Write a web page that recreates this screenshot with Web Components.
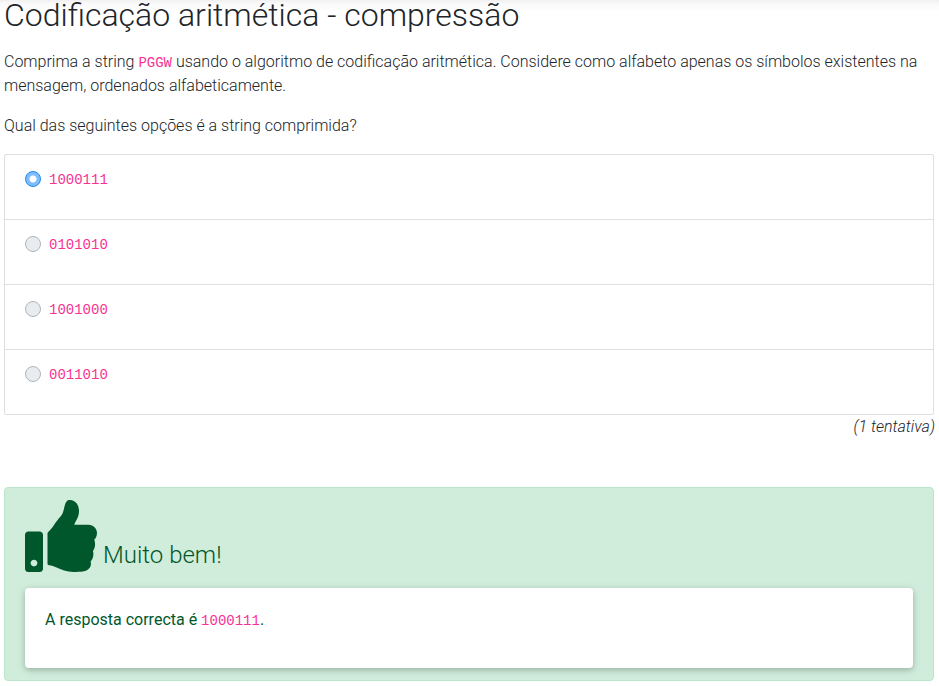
<!DOCTYPE html>
<html lang="pt">
<head>
<meta charset="utf-8">
<title>Codificação aritmética - compressão</title>
<style>
body{margin:0;background:#fff;color:#212529;font:300 16px/24px Roboto,"Liberation Sans",sans-serif}
</style>
</head>
<body>
<quiz-page>
  <quiz-question heading="Codificação aritmética - compressão">
    <p>Comprima a string <code-text>PGGW</code-text> usando o algoritmo de codificação aritmética. Considere como alfabeto apenas os símbolos existentes na mensagem, ordenados alfabeticamente.</p>
    <p>Qual das seguintes opções é a string comprimida?</p>
  </quiz-question>
  <quiz-options options="1000111 0101010 1001000 0011010" selected="0">(1 tentativa)</quiz-options>
  <quiz-feedback heading="Muito bem!">A resposta correcta é <code-text>1000111</code-text>.</quiz-feedback>
</quiz-page>
<script>
function define(name, render) {
  customElements.define(name, class extends HTMLElement {
    constructor() {
      super();
      this.attachShadow({mode: 'open'}).innerHTML = render(this);
    }
  });
}

define('code-text', () => `
<style>
:host{display:inline}
code{font:400 14px "Liberation Mono",monospace;color:#f83292}
</style><code><slot></slot></code>`);

define('quiz-page', () => `
<style>
:host{display:block}
main{padding:0 5px 5px 4px;background:linear-gradient(#f0f0f0,#fafafa 4px,#fff 12px) top/100% 12px no-repeat}
</style><main><slot></slot></main>`);

define('quiz-question', el => `
<style>
:host{display:block}
h1{margin:0 0 20px;font-size:32px;line-height:30px;font-weight:300}
::slotted(p){margin:0 0 16px}
</style><h1>${el.getAttribute('heading')}</h1><slot></slot>`);

define('quiz-options', el => `
<style>
:host{display:block}
fieldset{margin:0;padding:0;min-width:0;border:1px solid #dfdfdf;border-radius:2px}
label{display:flex;align-items:center;gap:8px;padding:12px 20px 28px}
label+label{border-top:1px solid #dfdfdf}
input{appearance:none;box-sizing:border-box;flex:none;width:16px;height:16px;margin:0;border:1px solid #adb5bd;border-radius:50%;background:#e9ecef}
input:checked{border-color:#1e88f0;background:radial-gradient(circle,#fff 3px,#7fbdff 4px)}
footer{text-align:right;font-style:italic;margin-right:-1px}
</style>
<fieldset aria-label="Opções">${el.getAttribute('options').split(' ').map((o, i) =>
  `<label><input type="radio" name="answer" value="${o}"${String(i) === el.getAttribute('selected') ? ' checked' : ''}><code-text>${o}</code-text></label>`).join('')}</fieldset>
<footer><slot></slot></footer>`);

define('quiz-feedback', el => `
<style>
:host{display:block;margin-top:48px}
section{padding:12px 20px;border:1px solid #b8e6cb;border-radius:4px;background:#d0eddb;color:#00572b}
header{display:flex;align-items:flex-end;gap:6px;margin-bottom:16px}
svg{display:block;width:72px;height:72px;fill:currentColor}
h2{margin:0 0 2px;font-size:24px;line-height:30px;font-weight:300}
div{padding:20px 20px 36px;border-radius:4px;background:#fff;font-weight:400;box-shadow:0 2px 5px rgba(0,0,0,.16),0 2px 10px rgba(0,0,0,.12)}
</style>
<section>
<header><svg viewBox="0 0 512 512" aria-hidden="true"><path d="M104 224H24c-13.255 0-24 10.745-24 24v240c0 13.255 10.745 24 24 24h80c13.255 0 24-10.745 24-24V248c0-13.255-10.745-24-24-24zM64 472c-13.255 0-24-10.745-24-24s10.745-24 24-24 24 10.745 24 24-10.745 24-24 24zM384 81.452c0 42.416-25.97 66.208-33.277 94.548h101.723c33.397 0 59.397 27.746 59.553 58.098.084 17.938-7.546 37.249-19.439 49.197l-.11.11c9.836 23.337 8.237 56.037-9.308 79.469 8.681 25.895-.069 57.704-16.382 74.757 4.298 17.598 2.244 32.575-6.148 44.632C440.202 511.587 389.616 512 346.839 512l-2.845-.001c-48.287-.017-87.806-17.598-119.56-31.725-15.957-7.099-36.821-15.887-52.651-16.178-6.54-.12-11.783-5.457-11.783-11.998v-213.77c0-3.2 1.282-6.271 3.558-8.521 39.614-39.144 56.648-80.587 89.117-113.111 14.804-14.832 20.188-37.236 25.393-58.902C282.515 39.293 291.817 0 312 0c24 0 72 8 72 81.452z"/></svg><h2>${el.getAttribute('heading')}</h2></header>
<div><slot></slot></div>
</section>`);
</script>
</body>
</html>
